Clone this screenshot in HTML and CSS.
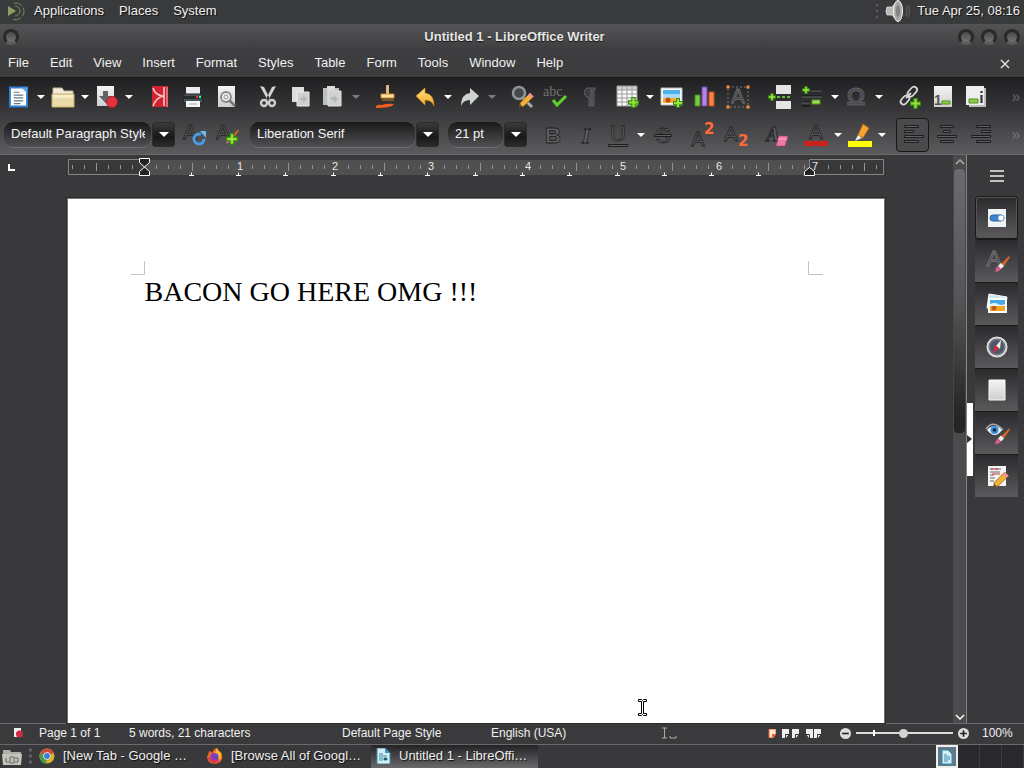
FILE: index.html
```html
<!DOCTYPE html>
<html lang="en">
<head>
<meta charset="utf-8">
<title>Untitled 1 - LibreOffice Writer</title>
<link rel="stylesheet" href="styles.css">
</head>
<body>
<svg class="defs" aria-hidden="true">
  <defs>
    <linearGradient id="g-paper" x1="0" y1="0" x2="0" y2="1"><stop offset="0" stop-color="#f4f4f4"/><stop offset="1" stop-color="#cfcfcf"/></linearGradient>
    <linearGradient id="g-gold" x1="0" y1="0" x2="0" y2="1"><stop offset="0" stop-color="#ffe58a"/><stop offset="1" stop-color="#f2a81c"/></linearGradient>
    <symbol id="plus" viewBox="0 0 10 10"><path d="M3.500 .5h3v3h3v3h-3v3h-3v-3h-3v-3h3z" fill="#9be33a" stroke="#2f8a10"/></symbol>
    <symbol id="doc" viewBox="0 0 20 22"><path d="M1 1h18v20H1z" fill="#fff" stroke="#2f7fd0" stroke-width="2"/><path d="M13 1l6 6V1z" fill="#5ba6ea"/><path d="M5 6h6M5 9h10M5 12h10M5 15h10M5 18h7" stroke="#68778a" stroke-width="1.300"/></symbol>
    <symbol id="brush" viewBox="0 0 16 16"><path d="M15 0l1 1-6 9-3-2z" fill="#d5632a"/><path d="M7 7l3 3-3 3-3-3z" fill="#eee"/><path d="M4 10l3 3c-2 3-4 2-6 3 1-2 0-4 3-6z" fill="#d95b8d"/></symbol>
    <symbol id="pencil" viewBox="0 0 16 16"><path d="M12 0l4 4L5 15l-5 1 1-5z" fill="#f2b034" stroke="#9b5b13" stroke-width=".8"/><path d="M12 0l4 4-2 2-4-4z" fill="#f08fa5"/><path d="M0 16l1-3 2 2z" fill="#333"/></symbol>
  </defs>
</svg>

<header class="panel">
  <svg class="i-menu" viewBox="0 0 20 20"><path d="M2 5l8 5-8 5z" fill="#8f9f63"/><g fill="none" stroke="#7b8b50"><path d="M9 5a5 5 0 1 1 0 10"/><path d="M8 2a8.500 8.500 0 1 1-1 16.500" stroke-dasharray="9 2"/></g></svg>
  <nav class="panel-nav"><a href="#">Applications</a><a href="#">Places</a><a href="#">System</a></nav>
  <svg class="i-sound" viewBox="0 0 36 24"><g fill="#56585a"><circle cx="3" cy="6" r="1.500"/><circle cx="3" cy="12" r="1.500"/><circle cx="3" cy="18" r="1.500"/></g><path d="M13 8h5l6-7q3 11 0 22l-6-7h-5q-2-4 0-8z" fill="#b9b9b6" stroke="#eee" stroke-width=".7"/><ellipse cx="24" cy="12" rx="4.500" ry="10.500" fill="#aaa9a5" stroke="#f2f2f2"/><ellipse cx="24" cy="12" rx="2" ry="6" fill="#81817f"/><path d="M32 7q2 5 0 10M34.500 6q2 6 0 12" stroke="#626466" fill="none"/></svg>
  <time class="clock">Tue Apr 25, 08:16</time>
</header>

<div class="titlebar">
  <button class="knob" aria-label="Window menu"></button>
  <h1 class="title">Untitled 1 - LibreOffice Writer</h1>
  <div class="knobs"><button class="knob" aria-label="Minimize"></button><button class="knob" aria-label="Maximize"></button><button class="knob" aria-label="Close"></button></div>
</div>

<nav class="menubar">
  <a href="#">File</a><a href="#">Edit</a><a href="#">View</a><a href="#">Insert</a><a href="#">Format</a><a href="#">Styles</a><a href="#">Table</a><a href="#">Form</a><a href="#">Tools</a><a href="#">Window</a><a href="#">Help</a>
  <button class="close-doc" aria-label="Close document"><svg viewBox="0 0 10 10"><path d="M1 1l8 8M9 1L1 9" stroke="#ddd" stroke-width="1.500"/></svg></button>
</nav>

<div class="toolbars">
  <div class="toolbar standard">
    <button class="tool" aria-label="New"><svg viewBox="0 0 24 24"><use href="#doc" x="2" y="1" width="19" height="22"/></svg></button><button class="drop" aria-label="New options"></button>
    <button class="tool" aria-label="Open"><svg viewBox="0 0 24 24"><path d="M2 21V3h9l2 3h9v15z" fill="#f1ece0" stroke="#c2b48e"/><path d="M1 9h22v13H1z" fill="#eadba9" stroke="#c7b06c"/><path d="M2 10h20v3H2z" fill="#f6edc9"/></svg></button><button class="drop" aria-label="Open options"></button>
    <button class="tool" aria-label="Save"><svg viewBox="0 0 24 24"><path d="M2 1h17v20H2z" fill="url(#g-paper)"/><path d="M8 6h5v5h4l-6.500 7L4 11h4z" fill="#606468"/><circle cx="17" cy="17" r="5.500" fill="#e5323f" stroke="#a8202b"/></svg></button><button class="drop" aria-label="Save options"></button>
    <span class="sep"></span>
    <button class="tool" aria-label="Export as PDF"><svg viewBox="0 0 24 24"><path d="M4 1h16v21H4z" fill="#cf2430"/><path d="M5 3q2 7 10 8Q8 13 5 21M16 2v19" stroke="#f5c9c9" fill="none" stroke-width="1.600"/><path d="M18 2h2v20h-2z" fill="#e86a70"/></svg></button>
    <button class="tool" aria-label="Print"><svg viewBox="0 0 24 24"><path d="M5 2h14v8H5z" fill="#eee"/><path d="M3 9h18l1 9H2z" fill="#49545a" stroke="#1d2428"/><path d="M3 11h18v3H3z" fill="#252b2e"/><path d="M15 12h2" stroke="#f33" stroke-width="2"/><path d="M18 12h2" stroke="#4fb" stroke-width="2"/><path d="M5 16h14v6H5z" fill="#f5f5f5"/><path d="M8 19h8" stroke="#aaa"/></svg></button>
    <button class="tool" aria-label="Print preview"><svg viewBox="0 0 24 24"><path d="M4 1h17v21H4z" fill="url(#g-paper)"/><circle cx="12" cy="12" r="5" fill="#e7edf0" stroke="#888" stroke-width="1.800"/><circle cx="12" cy="12" r="2" fill="none" stroke="#999"/><path d="M15 15l6 6" stroke="#777" stroke-width="2.500"/></svg></button>
    <span class="sep"></span>
    <button class="tool" aria-label="Cut"><svg viewBox="0 0 24 24"><path d="M4 1l4 1 6 12-2 2zM20 1l-4 1-6 12 2 2z" fill="#d4d4d4"/><g fill="none" stroke="#cdcdcd" stroke-width="2.400"><circle cx="8" cy="18" r="3"/><circle cx="16" cy="18" r="3"/></g></svg></button>
    <button class="tool" aria-label="Copy"><svg viewBox="0 0 24 24"><path d="M3 2h12v15H3z" fill="#dedede"/><path d="M8 7h12v14H8z" fill="#ccd0d0" stroke="#eee"/><path d="M11 13h3V10l4 4-4 4v-3h-3z" fill="#b5b9b9"/></svg></button>
    <button class="tool" aria-label="Paste"><svg viewBox="0 0 24 24"><path d="M1 3h16v17H1z" fill="#bfc1c1"/><path d="M5 1h8v4H5z" fill="#ddd"/><path d="M6 6h13v15H6z" fill="#cfd2d2" stroke="#e2e2e2"/><path d="M9 12h3v-2l4 4-4 4v-3H9z" fill="#b4b8b8"/></svg></button><button class="drop dim" aria-label="Paste options"></button>
    <span class="sep"></span>
    <button class="tool" aria-label="Clone formatting"><svg viewBox="0 0 24 24"><path d="M11 0h3v10h-3z" fill="#e0b878"/><path d="M6 9h13v4H6z" fill="#ffe1a0" stroke="#d5862c"/><path d="M7 14h12v2H7z" fill="#7b542b"/><path d="M1 21q3-2 6-1 5-2 12-1-2 3-5 3-6 1-13 1z" fill="#f25d1c"/></svg></button>
    <span class="sep narrow"></span>
    <button class="tool" aria-label="Undo"><svg viewBox="0 0 24 24"><path d="M2 11l9-8v5q9 1 9 13-2-6-9-6v5z" fill="url(#g-gold)" stroke="#d68d12" stroke-width=".6"/></svg></button><button class="drop" aria-label="Undo steps"></button>
    <button class="tool" aria-label="Redo"><svg viewBox="0 0 24 24"><path d="M21 11l-9-8v5q-9 1-9 13 2-6 9-6v5z" fill="#cfd2d2"/></svg></button><button class="drop dim" aria-label="Redo steps"></button>
    <span class="sep"></span>
    <button class="tool" aria-label="Find and replace"><svg viewBox="0 0 24 24"><circle cx="8" cy="8" r="6" fill="#45484b" stroke="#909496" stroke-width="2.500"/><path d="M12 13l9 9" stroke="#aaa" stroke-width="3"/><use href="#pencil" x="8" y="8" width="15" height="14"/></svg></button>
    <button class="tool" aria-label="Spelling"><svg viewBox="0 0 24 24"><text x="-1" y="11" class="glyph-small">abc</text><path d="M9 15l4 5 9-9" fill="none" stroke="#62cf2a" stroke-width="3"/></svg></button>
    <button class="tool" aria-label="Formatting marks"><svg viewBox="0 0 24 24"><path d="M18 3h-8a5 5 0 0 0 0 9h2v9h2V5h1v16h2V5h1z" fill="#3c3e40" stroke="#6a6c6e" stroke-width=".8"/></svg></button>
    <span class="sep narrow"></span>
    <button class="tool" aria-label="Insert table"><svg viewBox="0 0 24 24"><path d="M1 1h20v20H1z" fill="#f8f8f8"/><path d="M1 1h20v4H1z" fill="#d2d2d2"/><path d="M1 5h20M1 9h20M1 13h20M1 17h20M6 1v20M11 1v20M16 1v20M1 1h20v20H1z" stroke="#9b9b9b" fill="none"/><use href="#plus" x="12" y="12" width="11" height="11"/></svg></button><button class="drop" aria-label="Table options"></button>
    <button class="tool" aria-label="Insert image"><svg viewBox="0 0 24 24"><path d="M1 3h21v17H1z" fill="#fff" stroke="#bbb"/><path d="M3 5h17v7H3z" fill="#4eb0ec"/><path d="M3 9h17v4H3z" fill="#a6daf8"/><path d="M3 13h17v5H3z" fill="#f6a92d"/><circle cx="8" cy="15" r="2.500" fill="#c54b14"/><use href="#plus" x="13" y="13" width="10" height="10"/></svg></button>
    <button class="tool" aria-label="Insert chart"><svg viewBox="0 0 24 24"><path d="M2 10h5v11H2z" fill="#77c944" stroke="#448e20"/><path d="M9 2h5v19H9z" fill="#b384e5" stroke="#7546a6"/><path d="M16 7h5v14h-5z" fill="#f58545" stroke="#c34f17"/></svg></button>
    <button class="tool" aria-label="Insert text box"><svg viewBox="0 0 24 24"><path d="M2 2h20v20H2z" fill="none" stroke="#999" stroke-dasharray="2 2" stroke-width=".7"/><text x="12" y="18" class="glyph mid pale">A</text><path d="M.5.5h3v3h-3zM20.500.5h3v3h-3zM.5 20.500h3v3h-3zM20.500 20.500h3v3h-3z" fill="#ff8a3d"/></svg></button>
    <span class="sep"></span>
    <button class="tool" aria-label="Insert page break"><svg viewBox="0 0 24 24"><path d="M8 0h15v9H8zM8 16h15v8H8z" fill="#e4e4e4"/><path d="M9 12h14" stroke="#65bd32" stroke-width="2" stroke-dasharray="3 2"/><use href="#plus" x="0" y="8" width="8" height="8"/></svg></button>
    <button class="tool" aria-label="Insert field"><svg viewBox="0 0 24 24"><path d="M10 5h11M1 11h20M1 17h8M1 21h8" stroke="#1e2021" stroke-width="2"/><path d="M10 6h11M1 12h20M1 18h8" stroke="#727476" stroke-width=".8"/><path d="M11 15h8v4h-8z" fill="#a3da58" stroke="#4d9a18"/><use href="#plus" x="1" y="1" width="8" height="8"/></svg></button><button class="drop" aria-label="Field options"></button>
    <button class="tool" aria-label="Insert special characters"><svg viewBox="0 0 24 24"><text x="11" y="20" class="glyph big">Ω</text></svg></button><button class="drop" aria-label="Character options"></button>
    <span class="sep"></span>
    <button class="tool" aria-label="Insert hyperlink"><svg viewBox="0 0 24 24"><g fill="none" stroke="#d8d8d8" stroke-width="1.800"><rect x="2" y="12" width="10" height="6" rx="3" transform="rotate(-48 7 15)"/><rect x="9" y="4" width="11" height="6" rx="3" transform="rotate(-48 14 7)"/><path d="M8 13l5-5"/></g><use href="#plus" x="12" y="13" width="11" height="11"/></svg></button>
    <button class="tool" aria-label="Insert footnote"><svg viewBox="0 0 24 24"><path d="M3 1h18v21H3z" fill="url(#g-paper)"/><text x="3" y="20" class="one">1</text><path d="M11 16h8v3h-8z" fill="#8ccf45" stroke="#4c9220"/></svg></button>
    <button class="tool" aria-label="Insert endnote"><svg viewBox="0 0 24 24"><path d="M5 3h17v19H5z" fill="#bfbfbf"/><path d="M2 1h18v19H2z" fill="#eee"/><path d="M5 14h9v4H5z" fill="#8ccf45" stroke="#4c9220"/><path d="M17.500 6v2M17.500 10v8" stroke="#333" stroke-width="2.200"/></svg></button>
    <button class="more" aria-label="More">»</button>
  </div>

  <div class="toolbar formatting">
    <div class="combo style-combo"><input type="text" aria-label="Paragraph style" value="Default Paragraph Style"><button class="combo-btn" aria-label="Show paragraph styles"></button></div>
    <span class="sep tight"></span>
    <button class="tool" aria-label="Update style"><svg viewBox="0 0 24 24"><text x="7" y="16" class="glyph mid">A</text><circle cx="16" cy="16" r="5" fill="none" stroke="#4c9be8" stroke-width="3" stroke-dasharray="25 7"/><path d="M17 8l6 0v7z" fill="#70b8f5"/></svg></button>
    <button class="tool" aria-label="New style"><svg viewBox="0 0 24 24"><text x="7" y="16" class="glyph mid">A</text><use href="#brush" x="9" y="6" width="14" height="15"/><use href="#plus" x="10" y="10" width="12" height="12"/></svg></button>
    <span class="sep narrow"></span>
    <div class="combo font-combo"><input type="text" aria-label="Font name" value="Liberation Serif"><button class="combo-btn" aria-label="Show fonts"></button></div>
    <span class="sep"></span>
    <div class="combo size-combo"><input type="text" aria-label="Font size" value="21 pt"><button class="combo-btn" aria-label="Show font sizes"></button></div>
    <span class="sep"></span>
    <button class="tool" aria-label="Bold"><svg viewBox="0 0 24 24"><text x="12" y="20" class="glyph bold">B</text></svg></button>
    <button class="tool" aria-label="Italic"><svg viewBox="0 0 24 24"><text x="12" y="20" class="glyph ital">I</text></svg></button>
    <button class="tool" aria-label="Underline"><svg viewBox="0 0 24 24"><text x="11" y="18" class="glyph">U</text><path d="M1.500 21.500h19v2h-19z" class="outline"/></svg></button><button class="drop" aria-label="Underline options"></button>
    <button class="tool" aria-label="Strikethrough"><svg viewBox="0 0 24 24"><text x="12" y="20" class="glyph">S</text><path d="M3.500 11.500h17v2h-17z" class="outline"/></svg></button>
    <span class="sep narrow"></span>
    <button class="tool" aria-label="Superscript"><svg viewBox="0 0 24 24"><text x="8" y="23" class="glyph mid">A</text><text x="14" y="11" class="num">2</text></svg></button>
    <button class="tool" aria-label="Subscript"><svg viewBox="0 0 24 24"><text x="8" y="18" class="glyph mid">A</text><text x="15" y="23" class="num">2</text></svg></button>
    <span class="sep"></span>
    <button class="tool" aria-label="Clear formatting"><svg viewBox="0 0 24 24"><text x="8" y="18" class="glyph mid ital">A</text><path d="M14 13h9l-3 10h-9z" fill="#ee78a5" stroke="#bc3e70" stroke-width=".6"/><path d="M13 16h9" stroke="#f8b6cd"/></svg></button>
    <span class="sep narrow"></span>
    <button class="tool" aria-label="Font color"><svg viewBox="0 0 24 24"><text x="12" y="16" class="glyph mid">A</text><path d="M0 18h24v5H0z" fill="#c9211e"/></svg></button><button class="drop" aria-label="Font color options"></button>
    <button class="tool" aria-label="Highlight color"><svg viewBox="0 0 24 24"><path d="M15 1l6 4-6 10-5-3z" fill="#f5a331" stroke="#b36811"/><path d="M10 12l4 3-7 3z" fill="#eee"/><path d="M0 18h24v6H0z" fill="#ffff00"/></svg></button><button class="drop" aria-label="Highlight options"></button>
    <span class="sep"></span>
    <button class="tool pressed" aria-label="Align left"><svg viewBox="0 0 24 24"><path class="outline" d="M3.500 2.500h14v2h-14zM3.500 7.500h9v2h-9zM3.500 12.500h19v2h-19zM3.500 17.500h14v2h-14z"/></svg></button>
    <button class="tool" aria-label="Align center"><svg viewBox="0 0 24 24"><path class="outline" d="M6.500 2.500h13v2h-13zM9.500 7.500h7v2h-7zM3.500 12.500h19v2h-19zM6.500 17.500h13v2h-13z"/></svg></button>
    <button class="tool" aria-label="Align right"><svg viewBox="0 0 24 24"><path class="outline" d="M9.500 2.500h14v2h-14zM14.500 7.500h9v2h-9zM4.500 12.500h19v2h-19zM9.500 17.500h14v2h-14z"/></svg></button>
    <button class="more" aria-label="More formatting">»</button>
  </div>
</div>

<div class="workspace">
  <main class="editor">
    <div class="ruler-row">
      <svg class="tab-kind" viewBox="0 0 8 8"><path d="M1 0v6h6" fill="none" stroke="#fff" stroke-width="2"/></svg>
      <svg class="ruler" viewBox="0 0 816 18">
        <defs><pattern id="ticks" x="76" y="0" width="96" height="18" patternUnits="userSpaceOnUse"><path d="M12.500 6v4M24.500 6v4M36.500 6v4M48.500 4v8M60.500 6v4M72.500 6v4M84.500 6v4" stroke="#929292"/></pattern></defs>
        <rect x="76" y="1" width="666" height="15" fill="#505050"/>
        <path d="M76.500.5H.5v15h76M741.500.5h74v15h-74z" fill="#39393b" stroke="#868686"/>
        <rect y="0" width="816" height="15" fill="url(#ticks)"/>
        <g class="ruler-num"><text x="172" y="11">1</text><text x="267" y="11">2</text><text x="363" y="11">3</text><text x="460" y="11">4</text><text x="555" y="11">5</text><text x="651" y="11">6</text><text x="747" y="11">7</text></g>
        <path d="M121 16.500h5m-2.500 0v-3M168 16.500h5m-2.500 0v-3M215 16.500h5m-2.500 0v-3M263 16.500h5m-2.500 0v-3M310 16.500h5m-2.500 0v-3M357 16.500h5m-2.500 0v-3M405 16.500h5m-2.500 0v-3M452 16.500h5m-2.500 0v-3M499 16.500h5m-2.500 0v-3M547 16.500h5m-2.500 0v-3M594 16.500h5m-2.500 0v-3M641 16.500h5m-2.500 0v-3M688 16.500h5m-2.500 0v-3" stroke="#fff"/>
        <path d="M71.500-.5h10v4l-10 9v4h10v-4l-10-9zM736.500 16.500v-4l5-4 5 4v4z" fill="#222" stroke="#fff"/>
      </svg>
    </div>
    <article class="page">
      <svg class="crop" viewBox="0 0 692 15"><path d="M0 13.500h13.500V0M677.500 0v13.500H692" fill="none" stroke="#c4c4c4"/></svg>
      <p class="doc-text" contenteditable="true">BACON GO HERE OMG !!!</p>
    </article>
    <svg class="cursor" viewBox="0 0 9 19"><path d="M.5 1.500h3l1 1 1-1h3v2h-3v12h3v2h-3l-1-1-1 1h-3v-2h3v-12h-3z" fill="#fff" stroke="#000"/></svg>
  </main>
  <div class="scrollbar">
    <button class="scroll-btn" aria-label="Scroll up"><svg viewBox="0 0 10 6"><path d="M1 5l4-4 4 4" fill="none" stroke="#aaa" stroke-width="1.500"/></svg></button>
    <div class="scroll-track"><div class="thumb"></div></div>
    <button class="scroll-btn" aria-label="Scroll down"><svg viewBox="0 0 10 6"><path d="M1 1l4 4 4-4" fill="none" stroke="#fff" stroke-width="1.500"/></svg></button>
  </div>
  <div class="splitter"><button class="split-btn" aria-label="Hide sidebar"><svg viewBox="0 0 5 8"><path d="M0 0l5 4-5 4z" fill="#333"/></svg></button></div>
  <aside class="sidebar">
    <button class="side-menu" aria-label="Sidebar settings"><svg viewBox="0 0 14 12"><path d="M0 1h14M0 6h14M0 11h14" stroke="#eee" stroke-width="1.500"/></svg></button>
    <button class="side-tab active" aria-label="Properties"><svg viewBox="0 0 24 24"><path d="M3 3h18v18H3z" fill="#eef3f5"/><rect x="5" y="9" width="14" height="6" rx="3" fill="#3d85d0" stroke="#28629f"/><circle cx="16" cy="12" r="3" fill="#fff" stroke="#79a6d4"/></svg></button>
    <button class="side-tab" aria-label="Styles"><svg viewBox="0 0 24 24"><text x="9" y="17" class="glyph light">A</text><use href="#brush" x="9" y="7" width="16" height="16"/></svg></button>
    <button class="side-tab" aria-label="Gallery"><svg viewBox="0 0 24 24"><path d="M4 2l18 3-2 14L2 16z" fill="#c9e5f8" stroke="#fff"/><path d="M3 6h19v15H3z" fill="#fff"/><path d="M5 8h15v6H5z" fill="#48a9e9"/><path d="M5 13h15v6H5z" fill="#f3a52a"/><circle cx="9" cy="16" r="2.500" fill="#c15a18"/><path d="M5 12q5-2 8 0t7 0v2H5z" fill="#e4f3fa"/></svg></button>
    <button class="side-tab" aria-label="Navigator"><svg viewBox="0 0 24 24"><circle cx="12" cy="12" r="9.500" fill="#4e5668" stroke="#ddd" stroke-width="2"/><circle cx="12" cy="12" r="7.500" fill="none" stroke="#9399a5" stroke-width=".7"/><path d="M16 5l-1 9-4-3z" fill="#eee"/><path d="M8 19l2-9 4 3z" fill="#d92b3b"/></svg></button>
    <button class="side-tab" aria-label="Page"><svg viewBox="0 0 24 24"><path d="M4 2h16v20H4z" fill="url(#g-paper)" stroke="#fafafa"/></svg></button>
    <button class="side-tab" aria-label="Style inspector"><svg viewBox="0 0 24 24"><path d="M2 9q7-8 15 0-7 10-15 0z" fill="#f3f6f8"/><circle cx="9.500" cy="9" r="4" fill="#3c91dd"/><circle cx="9.500" cy="9" r="1.800" fill="#123"/><path d="M1 8q7-10 17 1" fill="none" stroke="#a8adb0" stroke-width="1.500"/><use href="#brush" x="9" y="7" width="16" height="17"/></svg></button>
    <button class="side-tab" aria-label="Manage changes"><svg viewBox="0 0 24 24"><path d="M3 2h18v20H3z" fill="#f5f5f5"/><path d="M5 5h3m2 0h6M5 8h10M5 11h4M5 14h5M5 17h4" stroke="#656565"/><path d="M6 5h7M7 10h8" stroke="#c33"/><use href="#pencil" x="8" y="8" width="16" height="15"/></svg></button>
  </aside>
</div>

<footer class="status">
  <svg class="i-saved" viewBox="0 0 10 10"><path d="M1 0h7v9H1z" fill="#eee"/><circle cx="6.500" cy="6" r="3.500" fill="#d02b45"/></svg>
  <span class="st-page">Page 1 of 1</span><span class="st-words">5 words, 21 characters</span><span class="st-style">Default Page Style</span><span class="st-lang">English (USA)</span>
  <svg class="i-insert" viewBox="0 0 16 12"><path d="M1 1h5M3.500 1v10M1 11h5M9 9v2h6V9" fill="none" stroke="#aaa"/></svg>
  <div class="views">
    <button aria-label="Single page view"><svg viewBox="0 0 8 9"><path d="M1 0h7v5L5 9H1z" fill="#ffe9d8" stroke="#f05a28"/><path d="M4 5h4L4 9z" fill="#f05a28"/></svg></button>
    <button aria-label="Multiple page view"><svg class="wide" viewBox="0 0 17 9"><path d="M0 0h7v5L4 9H0zM10 0h7v5l-3 4h-4z" fill="#eee"/><path d="M3.500 9V5.500H7M13.500 9V5.500H17" fill="none" stroke="#333"/></svg></button>
    <button aria-label="Book view"><svg class="wide" viewBox="0 0 17 9"><path d="M1 0h7v9H4L1 5zM9 0h7v5l-3 4H9z" fill="#eee"/><path d="M1 5.500h3.500V9M12.500 9V5.500H16" fill="none" stroke="#333"/></svg></button>
  </div>
  <button class="zoom-btn" aria-label="Zoom out"><svg viewBox="0 0 10 10"><circle cx="5" cy="5" r="5" fill="#ddd"/><path d="M2 5h6" stroke="#222" stroke-width="1.500"/></svg></button>
  <input class="zoom" type="range" min="0" max="100" value="49" aria-label="Zoom">
  <button class="zoom-btn" aria-label="Zoom in"><svg viewBox="0 0 10 10"><circle cx="5" cy="5" r="5" fill="#ddd"/><path d="M2 5h6M5 2v6" stroke="#222" stroke-width="1.500"/></svg></button>
  <span class="st-zoom">100%</span>
</footer>

<nav class="taskbar">
  <button class="desk" aria-label="Show desktop"><svg viewBox="0 0 20 18"><path d="M1 2h7l1 2h10v13H1z" fill="#adb0a6"/><path d="M0 6h20l-1 11H1z" fill="#c2c5bb"/><path d="M4 10v4h3M8 9h4v6H8zM13 10h3v4h-3" fill="none" stroke="#666a63"/></svg></button>
  <svg class="grip" viewBox="0 0 4 18"><path d="M0 2h3M0 8h3M0 14h3" stroke="#606264" stroke-width="3"/></svg>
  <button class="task"><svg viewBox="0 0 16 16"><circle cx="8" cy="8" r="7.500" fill="#d9b32e"/><path d="M8 8L1 5a8 8 0 0 1 14 0z" fill="#cf4a3a"/><path d="M8 8l-1 8A8 8 0 0 1 1 5z" fill="#4a9a4b"/><circle cx="8" cy="8" r="3.700" fill="#e9eef0"/><circle cx="8" cy="8" r="2.900" fill="#3c7dd0"/></svg><span>[New Tab - Google …</span></button>
  <button class="task"><svg viewBox="0 0 16 16"><path d="M2 3q2 0 3 2 2-5 5-5 1 3 4 4 4 9-4 11.500Q0 17 0 8q1 0 2-5z" fill="#ee642c"/><path d="M10 0q1 3 4 5 1 5-2 8-1-7-4-8z" fill="#f6bc2e"/><circle cx="7.500" cy="9" r="4" fill="#7942bc"/><path d="M1 9q1 6 7 6 4-1 5-4-4 3-8 0z" fill="#dc3558"/></svg><span>[Browse All of Googl…</span></button>
  <button class="task current"><svg viewBox="0 0 16 16"><path d="M2 0h8l5 5v11H2z" fill="#d6edf5" stroke="#398ba9"/><path d="M10 0l5 5h-5z" fill="#3a94b9"/><path d="M4 6h4M4 8h8M4 10h4M4 12h4M9 10h3v2H9z" stroke="#348bb0"/></svg><span>Untitled 1 - LibreOffi…</span></button>
  <div class="desks">
    <button class="ws on" aria-label="Workspace 1"><svg viewBox="0 0 16 16"><path d="M3 1h6l4 4v10H3z" fill="#d6edf5" stroke="#318baa"/><path d="M5 6h3M5 8h6M5 10h6M5 12h4" stroke="#348bb0"/></svg></button>
    <button class="ws" aria-label="Workspace 2"></button><button class="ws" aria-label="Workspace 3"></button><button class="ws" aria-label="Workspace 4"></button>
  </div>
</nav>
</body>
</html>
```

FILE: styles.css
```css
* { box-sizing: border-box; }
body {
  margin: 0;
  height: 100vh;
  display: flex;
  flex-direction: column;
  overflow: hidden;
  background: #39393b;
  color: #f0f0f0;
  font: 13px/16px "Liberation Sans", Arial, sans-serif;
}
a { color: inherit; text-decoration: none; }
button { margin: 0; padding: 0; border: 0; background: none; color: inherit; font: inherit; }
svg { display: block; flex: none; }
.defs { position: absolute; width: 0; height: 0; }

/* Desktop panel */
.panel { display: flex; align-items: center; height: 24px; flex: none; padding: 0 4px 2px 6px; background: #393a3b; text-shadow: 1px 1px 1px #111; }
.i-menu { width: 20px; height: 20px; margin-right: 8px; }
.panel-nav { display: flex; gap: 15px; }
.i-sound { width: 36px; height: 24px; margin-left: auto; }
.clock { margin-left: 7px; }

/* Window title */
.titlebar { display: flex; align-items: center; height: 26px; flex: none; padding: 0 4px 1px 3px; background: linear-gradient(#545456, #3e3e40); }
.title { flex: 1; margin: 0; padding-left: 52px; text-align: center; font-size: 13px; line-height: 16px; text-shadow: 0 1px 1px #111; color: #e6e6e6; }
.knobs { display: flex; gap: 7px; }
.knob { width: 16px; height: 16px; border-radius: 50%; border: 3px solid #29292a; border-bottom-color: #5c5c5e; background: linear-gradient(#4a4a4c, #727274); }

.menubar { display: flex; align-items: center; gap: 21px; height: 27px; flex: none; padding: 0 14px 2px 8px; background: #3d3d3f; }
.close-doc { margin-left: auto; padding-top: 3px; }
.close-doc svg { width: 10px; height: 10px; }

/* Toolbars */
.toolbars { flex: none; height: 78px; border-top: 1px solid #19191a; border-bottom: 1px solid #68686a; background: linear-gradient(#202022, #39393b 45%, #5b5b5e); }
.toolbar { display: flex; align-items: center; height: 38px; padding: 0 2px; }
.tool { flex: none; width: 33px; height: 34px; display: flex; align-items: center; justify-content: center; border-radius: 4px; }
.tool svg { width: 24px; height: 24px; overflow: visible; }
.pressed { border: 1px solid #161617; background: #4b4b4d; }
.drop { flex: none; width: 11px; height: 24px; display: flex; align-items: center; justify-content: center; }
.drop::after, .combo-btn::after { content: ""; border: 4px solid transparent; border-top-color: #fff; border-bottom: 0; }
.drop.dim::after { border-top-color: #7b7b7d; }
.sep { flex: none; width: 9px; }
.sep.narrow { width: 6px; }
.sep.tight { width: 3px; }
.more { margin-left: auto; width: 12px; color: #58585b; font-size: 16px; font-weight: bold; }
.formatting { padding-left: 4px; }
.formatting .more { color: #6a6a6d; }
.combo { flex: none; display: flex; gap: 1px; height: 26px; }
.combo input { flex: 1; min-width: 0; height: 26px; padding: 0 6px 3px 7px; border: 0; border-bottom: 1px solid #707073; border-radius: 9px; background: linear-gradient(#19191a, #3a3a3c 60%, #505053); color: #f4f4f4; font: inherit; outline: 0; }
.combo-btn { width: 23px; height: 25px; display: flex; align-items: center; justify-content: center; border: 1px solid #2b2b2c; border-radius: 3px; background: linear-gradient(#3b3b3d, #171718 60%, #2b2b2d); }
.combo-btn::after { border-width: 5px; border-bottom: 0; }
.style-combo { width: 171px; }
.font-combo { width: 189px; }
.size-combo { width: 79px; }

.glyph { font: 22px "Liberation Sans", sans-serif; text-anchor: middle; fill: #626265; stroke: #202122; stroke-width: 0.8px; }
.glyph.mid { font-size: 20px; }
.glyph.big { font-size: 23px; font-weight: bold; fill: #4a4a4d; stroke: #5f6163; }
.glyph.bold { font-weight: bold; }
.glyph.ital { font-family: "Liberation Serif", serif; font-style: italic; font-weight: bold; }
.glyph.light { fill: #444446; stroke: #77777a; }
.glyph.pale { fill: #38383a; stroke: #707274; }
.glyph-small { font: 14px "Liberation Serif", serif; fill: #707274; }
.outline { fill: #606063; stroke: #1c1d1e; }
.num { font: bold 15px "DejaVu Sans", sans-serif; fill: #ff6a38; }
.one { font: bold 14px "Liberation Sans", sans-serif; fill: #555; }

/* Document area */
.workspace { flex: 1; min-height: 0; display: flex; }
.editor { position: relative; flex: 1; min-width: 0; padding-right: 2px; display: flex; flex-direction: column; }
.ruler-row { display: grid; justify-items: center; padding-top: 4px; }
.ruler-row > * { grid-area: 1 / 1; }
.tab-kind { width: 8px; height: 8px; justify-self: start; align-self: center; margin-left: 8px; }
.ruler { width: 816px; height: 18px; overflow: visible; }
.ruler-num { font: 11px "Liberation Sans", sans-serif; text-anchor: middle; fill: #e6e6e6; }
.page { flex: 1; width: 818px; margin: 21px auto 0; padding: 62px 63px 0; border: solid #77777a; border-width: 1px 1px 0; background: #fff; color: #000; outline: 1px solid #2b2b2c; }
.crop { width: 692px; height: 15px; overflow: visible; }
.doc-text { margin: 0; padding: 0 14px; font: 28px/32px "Liberation Serif", "Times New Roman", serif; outline: 0; }
.cursor { position: absolute; right: 306px; bottom: 6px; width: 9px; height: 19px; }

.scrollbar { width: 14px; flex: none; display: flex; flex-direction: column; border-right: 1px solid #858587; background: #4b4b4d; }
.scroll-btn { height: 13px; display: flex; justify-content: center; align-items: center; }
.scroll-btn svg { width: 10px; height: 6px; }
.scroll-track { flex: 1; }
.thumb { height: 49%; border-radius: 5px; background: linear-gradient(#6b6b6d, #555557 50%, #242425 95%); border: 1px solid #454547; }
.splitter { width: 6px; flex: none; display: flex; align-items: center; }
.split-btn { width: 6px; height: 73px; background: #fff; display: flex; align-items: center; }
.split-btn svg { width: 5px; height: 8px; }
.sidebar { width: 51px; flex: none; padding: 0 6px 0 2px; display: flex; flex-direction: column; }
.side-menu { height: 41px; display: flex; align-items: center; justify-content: center; }
.side-menu svg { width: 14px; height: 12px; }
.side-tab { height: 43px; display: flex; align-items: center; justify-content: center; border-top: 1px solid #1b1b1c; background: linear-gradient(#2b2b2d, #5a5a5d); }
.side-tab svg { width: 24px; height: 24px; overflow: visible; }
.side-tab.active { border: 1px solid #19191a; border-radius: 3px; box-shadow: inset 0 0 0 1px #555; }

/* Status line */
.status { flex: none; height: 21px; display: flex; align-items: center; padding: 0 10px 2px 13px; border-top: 1px solid #6a6a6c; background: #3a3a3c; font-size: 12px; }
.status > * { flex: none; }
.i-saved { width: 10px; height: 10px; margin-right: 16px; }
.st-page { width: 90px; }
.st-words { width: 213px; }
.st-style { width: 149px; }
.status .st-lang { flex: 1; }
.i-insert { width: 16px; height: 12px; }
.views { display: flex; gap: 6px; margin: 0 18px 0 91px; }
.views svg { width: 8px; height: 9px; }
.views svg.wide { width: 17px; }
.zoom-btn svg { width: 11px; height: 11px; }
.zoom { appearance: none; width: 97px; height: 12px; margin: 0 5px; background: linear-gradient(#fff, #fff) 17px 50% / 2px 6px no-repeat, linear-gradient(#ddd, #ddd) 0 50% / 100% 2px no-repeat; }
.zoom::-webkit-slider-thumb { appearance: none; width: 9px; height: 9px; border-radius: 50%; background: #d2d2d2; }
.st-zoom { margin-left: 13px; width: 32px; }

/* Window list */
.taskbar { flex: none; height: 24px; display: flex; align-items: center; padding-left: 2px; border-top: 1px solid #6a6a6c; background: #39393b; }
.desk svg { width: 20px; height: 18px; }
.grip { width: 4px; height: 18px; margin: 0 4px 0 7px; }
.task { flex: none; width: 168px; height: 23px; display: flex; align-items: center; gap: 8px; padding: 0 0 2px 2px; white-space: nowrap; text-shadow: 1px 1px 1px #111; }
.task svg { width: 16px; height: 16px; }
.task.current { width: 167px; margin-left: -2px; padding-left: 4px; background: linear-gradient(#232325, #69696c); }
.desks { margin-left: auto; display: flex; height: 23px; background: #29292b; }
.ws { width: 22px; border-right: 1px solid #3d3d40; }
.ws.on { display: flex; align-items: center; justify-content: center; border: 2px solid #eee; background: #60798a; }
.ws svg { width: 16px; height: 16px; }
```
